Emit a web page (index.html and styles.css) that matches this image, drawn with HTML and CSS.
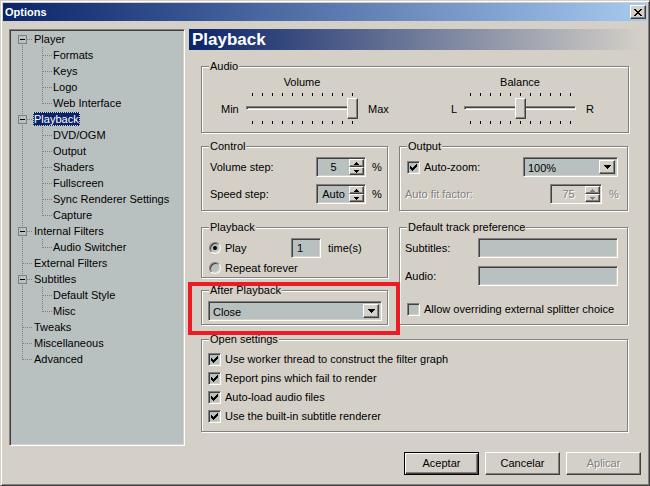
FILE: index.html
```
<!DOCTYPE html>
<html lang="en">
<head>
    <meta charset="UTF-8">
    <title>Options</title>
    <link rel="stylesheet" href="styles.css">
</head>
<body>

<div class="window">
    <div class="titlebar">
        <span class="title">Options</span>
        <span class="close-btn">
            <svg width="8" height="7" viewBox="0 0 8 7"><path d="M0 0h2v1H0zM6 0h2v1H6zM1 1h2v1H1zM5 1h2v1H5zM2 2h4v1H2zM3 3h2v1H3zM2 4h4v1H2zM1 5h2v1H1zM5 5h2v1H5zM0 6h2v1H0zM6 6h2v1H6z"/></svg>
        </span>
    </div>

    <div class="main">
        <!-- tree -->
        <div class="tree">
            <div class="row root first"><span class="toggle"></span><span class="label">Player</span></div>
            <div class="row child"><span class="label">Formats</span></div>
            <div class="row child"><span class="label">Keys</span></div>
            <div class="row child"><span class="label">Logo</span></div>
            <div class="row child last"><span class="label">Web Interface</span></div>
            <div class="row root"><span class="toggle"></span><span class="label selected">Playback</span></div>
            <div class="row child"><span class="label">DVD/OGM</span></div>
            <div class="row child"><span class="label">Output</span></div>
            <div class="row child"><span class="label">Shaders</span></div>
            <div class="row child"><span class="label">Fullscreen</span></div>
            <div class="row child"><span class="label">Sync Renderer Settings</span></div>
            <div class="row child last"><span class="label">Capture</span></div>
            <div class="row root"><span class="toggle"></span><span class="label">Internal Filters</span></div>
            <div class="row child last"><span class="label">Audio Switcher</span></div>
            <div class="row root"><span class="label">External Filters</span></div>
            <div class="row root"><span class="toggle"></span><span class="label">Subtitles</span></div>
            <div class="row child"><span class="label">Default Style</span></div>
            <div class="row child last"><span class="label">Misc</span></div>
            <div class="row root"><span class="label">Tweaks</span></div>
            <div class="row root"><span class="label">Miscellaneous</span></div>
            <div class="row root last"><span class="label">Advanced</span></div>
        </div>

        <!-- page -->
        <div class="page">
            <div class="page-header">Playback</div>

            <div class="group audio">
                <span class="group-title">Audio</span>
                <div class="sliders">
                    <div class="slider volume">
                        <div class="slider-name">Volume</div>
                        <div class="slider-row">
                            <span class="slider-lead">Min</span>
                            <div class="trackbar"><span class="channel"></span><span class="thumb" style="left:101px"></span></div>
                            <span class="slider-tail">Max</span>
                        </div>
                    </div>
                    <div class="slider balance">
                        <div class="slider-name">Balance</div>
                        <div class="slider-row">
                            <span class="slider-lead">L</span>
                            <div class="trackbar"><span class="channel"></span><span class="thumb" style="left:51px"></span></div>
                            <span class="slider-tail">R</span>
                        </div>
                    </div>
                </div>
            </div>

            <div class="cols">
                <div class="group control">
                    <span class="group-title">Control</span>
                    <div class="field">
                        <span class="field-label">Volume step:</span>
                        <span class="spin">
                            <span class="spin-value">5</span>
                            <span class="spin-btns">
                                <span class="spin-btn"><svg width="5" height="3" viewBox="0 0 5 3"><path d="M2 0h1v1H2zM1 1h3v1H1zM0 2h5v1H0z"/></svg></span>
                                <span class="spin-btn"><svg width="5" height="3" viewBox="0 0 5 3"><path d="M0 0h5v1H0zM1 1h3v1H1zM2 2h1v1H2z"/></svg></span>
                            </span>
                        </span>
                        <span class="unit">%</span>
                    </div>
                    <div class="field">
                        <span class="field-label">Speed step:</span>
                        <span class="spin">
                            <span class="spin-value">Auto</span>
                            <span class="spin-btns">
                                <span class="spin-btn"><svg width="5" height="3" viewBox="0 0 5 3"><path d="M2 0h1v1H2zM1 1h3v1H1zM0 2h5v1H0z"/></svg></span>
                                <span class="spin-btn"><svg width="5" height="3" viewBox="0 0 5 3"><path d="M0 0h5v1H0zM1 1h3v1H1zM2 2h1v1H2z"/></svg></span>
                            </span>
                        </span>
                        <span class="unit">%</span>
                    </div>
                </div>

                <div class="group output">
                    <span class="group-title">Output</span>
                    <div class="field zoom-row">
                        <span class="check-label zoom-check">
                            <span class="check"><svg width="7" height="7" viewBox="0 0 7 7"><path d="M0 2h1v3H0zM1 3h1v3H1zM2 4h1v3H2zM3 3h1v3H3zM4 2h1v3H4zM5 1h1v3H5zM6 0h1v3H6z"/></svg></span>
                            Auto-zoom:
                        </span>
                        <span class="combo zoom-combo">
                            <span class="combo-value">100%</span>
                            <span class="combo-btn"><svg width="7" height="4" viewBox="0 0 7 4"><path d="M0 0h7v1H0zM1 1h5v1H1zM2 2h3v1H2zM3 3h1v1H3z"/></svg></span>
                        </span>
                    </div>
                    <div class="field fit-row disabled">
                        <span class="field-label">Auto fit factor:</span>
                        <span class="spin off">
                            <span class="spin-value">75</span>
                            <span class="spin-btns">
                                <span class="spin-btn"><svg width="5" height="3" viewBox="0 0 5 3"><path d="M2 0h1v1H2zM1 1h3v1H1zM0 2h5v1H0z"/></svg></span>
                                <span class="spin-btn"><svg width="5" height="3" viewBox="0 0 5 3"><path d="M0 0h5v1H0zM1 1h3v1H1zM2 2h1v1H2z"/></svg></span>
                            </span>
                        </span>
                        <span class="unit">%</span>
                    </div>
                </div>
            </div>

            <div class="cols lower">
                <div class="stack">
                    <div class="group repeat">
                        <span class="group-title">Playback</span>
                        <div class="field">
                            <span class="radio-label"><span class="radio on"></span>Play</span>
                            <span class="edit times">1</span>
                            <span class="unit times-unit">time(s)</span>
                        </div>
                        <div class="field short">
                            <span class="radio-label"><span class="radio"></span>Repeat forever</span>
                        </div>
                    </div>
                    <div class="group after">
                        <span class="group-title">After Playback</span>
                        <span class="combo after-combo">
                            <span class="combo-value">Close</span>
                            <span class="combo-btn"><svg width="7" height="4" viewBox="0 0 7 4"><path d="M0 0h7v1H0zM1 1h5v1H1zM2 2h3v1H2zM3 3h1v1H3z"/></svg></span>
                        </span>
                    </div>
                </div>

                <div class="group tracks">
                    <span class="group-title">Default track preference</span>
                    <div class="field">
                        <span class="field-label">Subtitles:</span>
                        <span class="edit track-edit"></span>
                    </div>
                    <div class="field">
                        <span class="field-label">Audio:</span>
                        <span class="edit track-edit"></span>
                    </div>
                    <div class="check-row splitter">
                        <span class="check"></span>
                        Allow overriding external splitter choice
                    </div>
                </div>
            </div>

            <div class="group open">
                <span class="group-title">Open settings</span>
                <div class="check-row">
                    <span class="check"><svg width="7" height="7" viewBox="0 0 7 7"><path d="M0 2h1v3H0zM1 3h1v3H1zM2 4h1v3H2zM3 3h1v3H3zM4 2h1v3H4zM5 1h1v3H5zM6 0h1v3H6z"/></svg></span>
                    Use worker thread to construct the filter graph
                </div>
                <div class="check-row">
                    <span class="check"><svg width="7" height="7" viewBox="0 0 7 7"><path d="M0 2h1v3H0zM1 3h1v3H1zM2 4h1v3H2zM3 3h1v3H3zM4 2h1v3H4zM5 1h1v3H5zM6 0h1v3H6z"/></svg></span>
                    Report pins which fail to render
                </div>
                <div class="check-row">
                    <span class="check"><svg width="7" height="7" viewBox="0 0 7 7"><path d="M0 2h1v3H0zM1 3h1v3H1zM2 4h1v3H2zM3 3h1v3H3zM4 2h1v3H4zM5 1h1v3H5zM6 0h1v3H6z"/></svg></span>
                    Auto-load audio files
                </div>
                <div class="check-row">
                    <span class="check"><svg width="7" height="7" viewBox="0 0 7 7"><path d="M0 2h1v3H0zM1 3h1v3H1zM2 4h1v3H2zM3 3h1v3H3zM4 2h1v3H4zM5 1h1v3H5zM6 0h1v3H6z"/></svg></span>
                    Use the built-in subtitle renderer
                </div>
            </div>
        </div>
    </div>

    <div class="buttons">
        <span class="btn default">Aceptar</span>
        <span class="btn">Cancelar</span>
        <span class="btn disabled">Aplicar</span>
    </div>

    <!-- highlight drawn on the screenshot -->
    <div class="marker"></div>
</div>

</body>
</html>
```

FILE: styles.css
```
* {
    margin: 0;
    padding: 0;
    box-sizing: border-box;
}

body {
    width: 650px;
    height: 486px;
    overflow: hidden;
    background: #d4d0c8;
    font-family: "Liberation Sans", Arial, sans-serif;
    font-size: 11px;
    line-height: 13px;
    color: #000;
}

svg {
    display: block;
    fill: #000;
}

/* Window frame */
.window {
    position: relative;
    width: 650px;
    height: 486px;
    padding: 2px;
    background: #d4d0c8;
    border: 1px solid;
    border-color: #d4d0c8 #404040 #404040 #d4d0c8;
    box-shadow: inset 1px 1px #fff, inset -1px -1px #808080;
}

.titlebar {
    display: flex;
    align-items: center;
    justify-content: space-between;
    height: 18px;
    padding: 0 1px 0 2px;
    background: linear-gradient(to right, #0a246a, #a6caf0);
    color: #fff;
    font-weight: bold;
}

.close-btn {
    display: flex;
    align-items: center;
    justify-content: center;
    width: 16px;
    height: 14px;
    background: #d4d0c8;
    border: 1px solid;
    border-color: #fff #404040 #404040 #fff;
    box-shadow: inset -1px -1px #808080;
}

.main {
    display: flex;
    gap: 4px;
    height: 425px;
    padding: 8px 0 0 6px;
}

/* Tree */
.tree {
    width: 176px;
    height: 417px;
    padding: 1px;
    background: #b9c0c0;
    border: 1px solid;
    border-color: #808080 #fff #fff #808080;
    box-shadow: inset 1px 1px #404040, inset -1px -1px #d4d0c8;
}

.row {
    --dots-v: repeating-linear-gradient(to bottom, #808080 0 1px, transparent 1px 2px);
    --dots-h: repeating-linear-gradient(to right, #808080 0 1px, transparent 1px 2px);
    display: flex;
    align-items: center;
    height: 16px;
    white-space: nowrap;
}

.row.root {
    background:
        var(--dots-v) 11px 0 / 1px 16px no-repeat,
        var(--dots-h) 12px 8px / 10px 1px no-repeat;
}

.row.root.first {
    background:
        var(--dots-v) 11px 8px / 1px 8px no-repeat,
        var(--dots-h) 12px 8px / 10px 1px no-repeat;
}

.row.root.last {
    background:
        var(--dots-v) 11px 0 / 1px 9px no-repeat,
        var(--dots-h) 12px 8px / 10px 1px no-repeat;
}

.row.child {
    background:
        var(--dots-v) 11px 0 / 1px 16px no-repeat,
        var(--dots-v) 31px 0 / 1px 16px no-repeat,
        var(--dots-h) 32px 8px / 9px 1px no-repeat;
}

.row.child.last {
    background:
        var(--dots-v) 11px 0 / 1px 16px no-repeat,
        var(--dots-v) 31px 0 / 1px 9px no-repeat,
        var(--dots-h) 32px 8px / 9px 1px no-repeat;
}

.toggle {
    width: 9px;
    height: 9px;
    margin-left: 7px;
    border: 1px solid #808080;
    background: #b9c0c0 linear-gradient(#000, #000) center / 5px 1px no-repeat;
}

.label {
    margin-left: 22px;
    padding: 0 1px;
    line-height: 14px;
}

.toggle + .label {
    margin-left: 6px;
}

.child .label {
    margin-left: 41px;
}

.label.selected {
    background: #0a246a;
    color: #fff;
    outline: 1px dotted #d4d0c8;
    outline-offset: -1px;
}

/* Right page */
.page {
    width: 454px;
}

.page-header {
    height: 21px;
    padding-left: 3px;
    background: linear-gradient(to right, #0a246a, #d4d0c8);
    color: #fff;
    font-size: 17px;
    font-weight: bold;
    line-height: 21px;
}

.group {
    position: relative;
    border: 1px solid #808080;
    box-shadow: inset 1px 1px #fff, 1px 1px #fff;
}

.group-title {
    position: absolute;
    top: -7px;
    left: 7px;
    padding: 0 1px;
    background: #d4d0c8;
    white-space: nowrap;
}

/* Audio sliders */
.audio {
    width: 428px;
    height: 67px;
    margin: 16px 0 0 12px;
}

.sliders {
    display: flex;
    padding: 9px 0 0 19px;
}

.slider-name {
    width: 112px;
    text-align: center;
}

.volume .slider-name {
    margin-left: 25px;
}

.balance {
    margin-left: 53px;
}

.balance .slider-name {
    margin-left: 13px;
}

.slider-row {
    display: flex;
    align-items: center;
    margin-top: 4px;
}

.volume .slider-lead {
    width: 25px;
}

.balance .slider-lead {
    width: 13px;
}

.slider-tail {
    width: 30px;
    margin-left: 10px;
}

.trackbar {
    position: relative;
    width: 112px;
    height: 32px;
    background:
        repeating-linear-gradient(to right, #000 0 1px, transparent 1px 10px) 6px 0 / 101px 3px no-repeat,
        repeating-linear-gradient(to right, #000 0 1px, transparent 1px 10px) 6px 28px / 101px 3px no-repeat;
}

.channel {
    display: block;
    height: 4px;
    margin-top: 13px;
    background: #d4d0c8;
    border: 1px solid;
    border-color: #808080 #fff #fff #808080;
    box-shadow: inset 1px 1px #404040;
}

.thumb {
    position: absolute;
    top: 5px;
    width: 11px;
    height: 21px;
    background: #d4d0c8;
    border: 1px solid;
    border-color: #fff #404040 #404040 #fff;
    box-shadow: inset -1px -1px #808080;
}

/* Columns of groups */
.cols {
    display: grid;
    grid-template-columns: 187px 229px;
    column-gap: 11px;
    margin: 13px 0 0 12px;
}

.cols.lower {
    margin-top: 16px;
}

.control,
.output {
    height: 65px;
    padding-top: 10px;
}

.control {
    padding-left: 8px;
}

.field {
    display: flex;
    align-items: center;
    height: 20px;
    white-space: nowrap;
}

.field + .field {
    margin-top: 7px;
}

.control .field-label {
    width: 106px;
}

.unit {
    margin-left: 6px;
}

/* sunken edit look */
.spin,
.edit,
.combo,
.check,
.radio {
    background: #b9c0c0;
    border: 1px solid;
    border-color: #808080 #fff #fff #808080;
    box-shadow: inset 1px 1px #404040, inset -1px -1px #d4d0c8;
}

.spin {
    display: flex;
    width: 50px;
    height: 20px;
    padding: 1px;
}

.spin-value {
    flex: 1;
    line-height: 16px;
    text-align: center;
}

.spin-btns {
    display: flex;
    flex-direction: column;
    width: 15px;
}

.spin-btn,
.combo-btn {
    display: flex;
    align-items: center;
    justify-content: center;
    background: #d4d0c8;
    border: 1px solid;
    border-color: #fff #404040 #404040 #fff;
    box-shadow: inset -1px -1px #808080;
}

.spin-btn {
    height: 8px;
}

.spin.off {
    width: 52px;
    background: #d4d0c8;
}

.spin.off svg {
    fill: #808080;
}

.disabled {
    color: #808080;
    text-shadow: 1px 1px 0 #fff;
}

.zoom-row {
    padding-left: 7px;
}

.check-label {
    display: flex;
    align-items: center;
    gap: 4px;
}

.zoom-check {
    width: 116px;
}

.check {
    display: flex;
    align-items: center;
    justify-content: center;
    flex: none;
    width: 13px;
    height: 13px;
}

.combo {
    display: flex;
    height: 20px;
    padding: 2px;
}

.combo-value {
    flex: 1;
    padding-left: 2px;
    line-height: 16px;
}

.combo-btn {
    width: 16px;
}

.zoom-combo {
    width: 95px;
}

.fit-row {
    padding-left: 5px;
}

.fit-row .field-label {
    width: 145px;
}

.fit-row .unit {
    margin-left: 7px;
}

/* Playback repeat */
.stack {
    display: flex;
    flex-direction: column;
}

.repeat {
    height: 51px;
    padding: 10px 0 0 7px;
}

.radio-label {
    display: flex;
    align-items: center;
    gap: 4px;
    width: 82px;
}

.field.short {
    height: 14px;
    margin-top: 3px;
}

.field.short .radio-label {
    width: auto;
}

.radio {
    display: flex;
    align-items: center;
    justify-content: center;
    width: 12px;
    height: 12px;
    border-radius: 50%;
}

.radio.on::after {
    content: "";
    width: 4px;
    height: 4px;
    border-radius: 50%;
    background: #000;
}

.edit {
    display: block;
    height: 20px;
    padding-left: 5px;
    line-height: 18px;
}

.times {
    width: 30px;
}

.times-unit {
    margin-left: 7px;
}

.after {
    height: 35px;
    margin-top: 12px;
    padding: 10px 0 0 6px;
}

.after-combo {
    width: 174px;
}

/* Default tracks */
.tracks {
    height: 98px;
    padding: 10px 0 0 5px;
}

.tracks .field + .field {
    margin-top: 8px;
}

.tracks .field-label {
    width: 73px;
}

.track-edit {
    width: 140px;
}

.check-row {
    display: flex;
    align-items: center;
    gap: 4px;
    height: 19px;
    white-space: nowrap;
}

.splitter {
    margin-top: 14px;
    padding-left: 2px;
}

/* Open settings */
.open {
    width: 427px;
    height: 93px;
    margin: 14px 0 0 12px;
    padding: 10px 0 0 6px;
}

/* Buttons */
.buttons {
    display: flex;
    justify-content: flex-end;
    gap: 6px;
    margin-top: 6px;
    padding-right: 6px;
}

.btn {
    display: flex;
    align-items: center;
    justify-content: center;
    width: 75px;
    height: 23px;
    background: #d4d0c8;
    border: 1px solid;
    border-color: #fff #404040 #404040 #fff;
    box-shadow: inset -1px -1px #808080;
}

.btn.default {
    border-color: #000;
    box-shadow: inset 1px 1px #fff, inset -1px -1px #404040, inset -2px -2px #808080;
}

/* red annotation box */
.marker {
    position: absolute;
    left: 187px;
    top: 281px;
    width: 212px;
    height: 53px;
    border: 4px solid #ed1c24;
}
```
